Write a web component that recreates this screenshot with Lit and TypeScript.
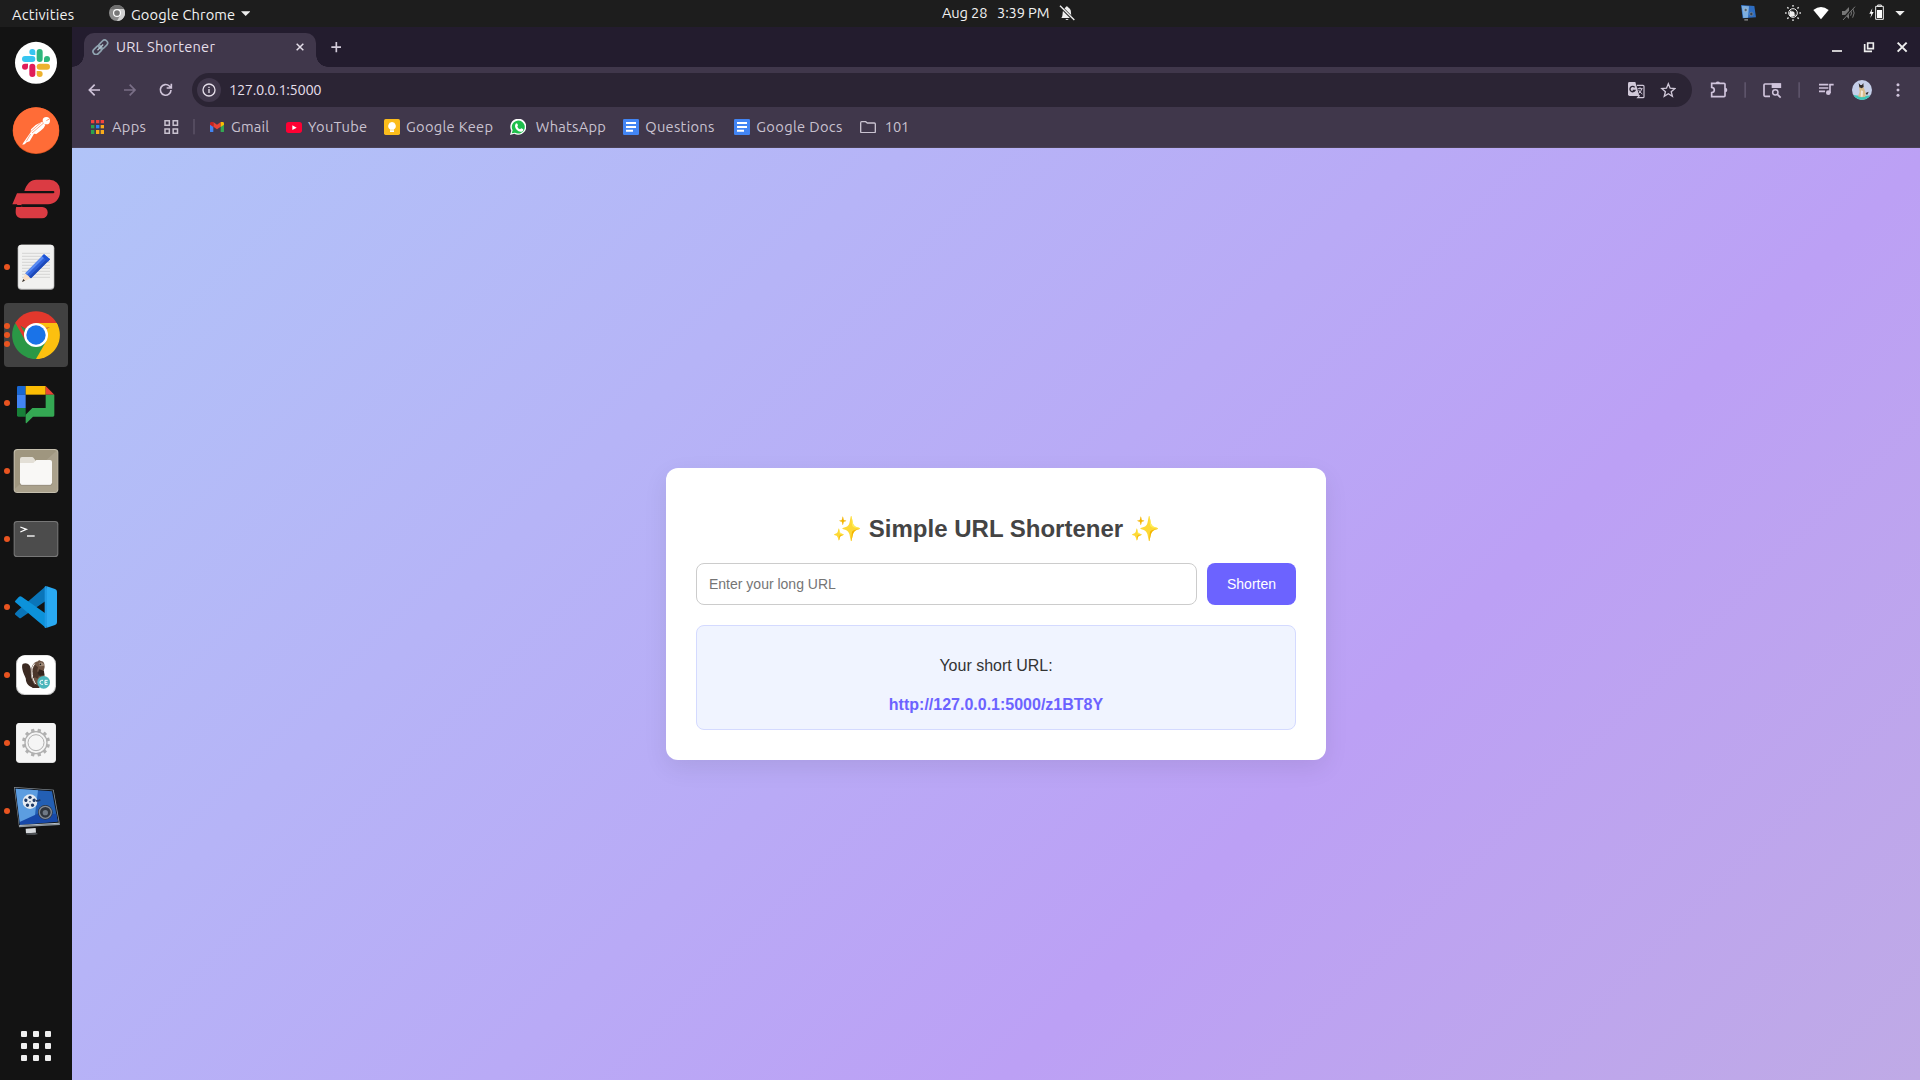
import { LitElement, html, svg, css } from "lit";
import { customElement, property } from "lit/decorators.js";

/** Icon drawn on a grid of three units per pixel; x/y/w/h are grid units. */
const icon = (x: number, y: number, w: number, h: number, body: unknown) =>
  html`<svg class="icon" width=${w / 3} height=${h / 3} viewBox="${x} ${y} ${w} ${h}">${body}</svg>`;

/** Single-line label that tracks its letters to fill a given width. */
@customElement("ui-label")
class UiLabel extends LitElement {
  @property() text = "";
  @property({ type: Number }) width = 0;

  static styles = css`
    :host { display: block; white-space: pre; flex: none; }
    .text { display: inline-block; }
  `;

  firstUpdated() {
    const el = this.renderRoot.querySelector<HTMLElement>(".text")!;
    const natural = el.getBoundingClientRect().width;
    this.style.width = this.width + "px";
    el.style.letterSpacing = (this.width + 0.3 - natural) / this.text.length + "px";
  }

  render() {
    return html`<span class="text">${this.text}</span>`;
  }
}

const gear = Array.from({ length: 12 }, (_, i) => svg`<rect x="103" y="506" width="10" height="10" rx="1" fill="#b0b0b0" transform="rotate(${i * 30 + 15} 108 548)"/>`);
const holes = Array.from({ length: 5 }, (_, i) => svg`<circle cx="90" cy="712" r="5" fill="#1d3a66" transform="rotate(${i * 72} 90 725)"/>`);
const rays = Array.from({ length: 8 }, (_, i) => svg`<rect x="577" y="15" width="4" height="5" fill="#eee" transform="rotate(${i * 45} 579 39)"/>`);

const dockApps = [
  { dots: 0, art: icon(12, 33, 192, 192, svg`
    <circle cx="108" cy="128.5" r="63" fill="#fff"/>
    <g fill="#36c5f0"><rect x="66" y="108" width="40" height="18" rx="9"/><path d="M97 87a9 9 0 0 1 9 9v9h-9a9 9 0 0 1 0-18z"/></g>
    <g fill="#2eb67d"><rect x="110" y="87" width="18" height="39" rx="9"/><path d="M132 126v-9a9 9 0 1 1 9 9z"/></g>
    <g fill="#e01e5a"><rect x="88" y="131" width="18" height="40" rx="9"/><path d="M84 131v9a9 9 0 1 1-9-9z"/></g>
    <g fill="#ecb22e"><rect x="110" y="131" width="40" height="18" rx="9"/><path d="M110 153h9a9 9 0 1 1-9 9z"/></g>`) },
  { dots: 0, art: icon(12, 237, 192, 192, svg`
    <circle cx="108" cy="332" r="70" fill="#d9531f"/><circle cx="108" cy="331" r="69" fill="#ff6c37"/>
    <circle cx="139" cy="302" r="11" fill="#fff"/>
    <path d="M139 302l9-5" stroke="#ff6c37" stroke-width="2"/>
    <path d="M126 305l10 10q-2 8-14 17l-13 10-7-1-13 23-9 3-6 6-7 1 2-4 23-33 1-9 14-13z" fill="#fff"/>
    <path d="M131 309l-35 30M124 307l-32 28M92 342l-13 22" stroke="#ff6c37" stroke-width="1.800"/>`) },
  { dots: 0, art: icon(12, 441, 192, 192, svg`
    <path d="M73 513C80 492 91 479 109 479h40a31 31 0 0 1 31 31v6c0 20-15 37-36 37H65c-2 3-2 8 4 8h58a16 16 0 0 1 16 16v1a17 17 0 0 1-17 17H67c-14 0-20-9-20-19 0-10 1-16 5-23H37l14-33h107c7 0 7-7 0-7z" fill="#db3b43"/>
    <path d="M48 555h17v6H48z" fill="#131313"/>`) },
  { dots: 1, art: icon(12, 645, 192, 192, svg`
    <rect x="53" y="674" width="110" height="135" rx="11" fill="#b9b9b9"/><rect x="55" y="674" width="106" height="132" rx="10" fill="#f1f1f0"/>
    <path d="M66 700h84M66 709h84M66 718h84M66 727h84M66 736h84M66 745h84M66 754h84M66 763h84M66 772h84" stroke="#c7c7c7" stroke-width="2"/>
    <path d="M66 786l10-26 17 15z" fill="#f9dfc5"/><path d="M66 786l4-9 5 5z" fill="#333"/>
    <path d="M76 760l56-57 18 15-57 57z" fill="#2d5fd8"/><path d="M76 760l56-57 6 5-57 56z" fill="#5b8cf2"/><path d="M87 770l57-57 6 5-57 57z" fill="#1e49b8"/>
    <path d="M126 709l6-6 18 15-6 7z" fill="#1c54d6"/>`) },
  { dots: 3, active: true, art: icon(12, 39, 192, 192, svg`
    <path d="M108 135L46 99A72 72 0 0 1 170 99z" fill="#e2382c"/>
    <path d="M108 135L170 99A72 72 0 0 1 108 207z" fill="#fcc00f"/>
    <path d="M108 135L108 207A72 72 0 0 1 46 99z" fill="#2a9846"/>
    <path d="M108 99h62a72 72 0 0 1 4 9l-66 10z" fill="#fcc00f"/>
    <path d="M139 153l-31 54-16-40z" fill="#2a9846"/>
    <path d="M46 99l31 54 8-5-33-57z" fill="#e2382c"/>
    <circle cx="108" cy="135" r="36" fill="#fff"/><circle cx="108" cy="135" r="29" fill="#1a73e8"/>`) },
  { dots: 1, art: icon(12, 243, 192, 192, svg`
    <path d="M55 288h22v26H51v-22a4 4 0 0 1 4-4z" fill="#1967d2"/><path d="M77 288h60v26H77z" fill="#fbbc04"/><path d="M137 288l26 26h-26z" fill="#ea4335"/>
    <path d="M51 314h26v40H51z" fill="#4285f4"/><path d="M51 354h26v26H55a4 4 0 0 1-4-4z" fill="#188038"/>
    <path d="M137 314h26v62a4 4 0 0 1-4 4H99l-19 19q-3 2-3-2v-23l20-20h40z" fill="#34a853"/>`) },
  { dots: 1, art: icon(12, 447, 192, 192, svg`
    <rect x="41" y="477" width="134" height="132" rx="11" fill="#c5bfae"/><rect x="44" y="480" width="128" height="126" rx="9" fill="#9f967f"/>
    <path d="M172 480v117a9 9 0 0 1-9 9H53a9 9 0 0 1-9-9z" fill="#aaa18c"/>
    <path d="M66 501h30q3 0 5 3l6 8v20H60v-25q0-6 6-6z" fill="#e3dfd6"/><path d="M60 519h40l9-9h41q6 0 6 6v64q0 6-6 6H66q-6 0-6-6z" fill="#f9f8f6"/>
    <path d="M60 580q0 6 6 6h84q6 0 6-6" fill="none" stroke="#7d7663" stroke-width="2"/>`) },
  { dots: 1, art: icon(12, 651, 192, 192, svg`
    <rect x="41" y="693" width="134" height="108" rx="10" fill="#777"/><rect x="44" y="696" width="128" height="102" rx="8" fill="#4c4c4c"/>
    <path d="M61 711l18 7-18 8" fill="none" stroke="#fff" stroke-width="4"/><path d="M81 738h23" stroke="#fff" stroke-width="4"/>`) },
  { dots: 1, art: icon(12, 45, 192, 192, svg`
    <path d="M46 159l8-8 84-73v44L64 173q-4 3-7 0l-11-9q-3-2 0-5z" fill="#0a75b9"/>
    <path d="M46 122l11-12q4-3 8 0l73 51v43L46 127q-3-2 0-5z" fill="#0c92da"/>
    <path d="M138 78l27 9q6 2 6 8v92q0 6-6 8l-27 9q3-2 3-7V85q0-5-3-7z" fill="#29a9f2"/><path d="M138 78q3 2 3 7v112q0 5-3 7l-4-1V80z" fill="#1f9ae6"/>`) },
  { dots: 1, art: icon(12, 249, 192, 192, svg`
    <rect x="48" y="286" width="120" height="119" rx="26" fill="#c9c9c9"/><rect x="51" y="286" width="114" height="116" rx="24" fill="#fff"/>
    <path d="M68 312c8-5 18-2 22 7 5 10 1 20 4 32 2 9 8 16 10 24l3 9c-14-1-26-9-29-22 1-9-6-16-9-27-3-10-4-17-1-23z" fill="#3b2a22"/>
    <path d="M95 321c4-10 12-17 19-17 1-4 6-4 8-1 6 0 10 4 11 9l1 9-3 12 3 15-7 33h-17c-8-7-14-17-15-30-1-11-3-20 0-30z" fill="#6f5545"/>
    <path d="M104 311c-8 10-9 20-7 32 1 12 5 22 11 31" fill="none" stroke="#fff" stroke-width="3"/>
    <path d="M98 327l8-12 8 7-3 12 9 8-8 14-7-4-6 3z" fill="#4a352a"/><path d="M118 328l14 5 1 12-14 3-6-8z" fill="#33241d"/>
    <path d="M116 309l8-2 8 5-1 6-12 1z" fill="#a08a78"/>
    <circle cx="121" cy="313" r="2.5" fill="#111"/><path d="M96 379q4-7 12-7l12 12H98z" fill="#3b2a22"/>
    <circle cx="131" cy="367" r="19" fill="#4bb6bc"/>
    <path d="M129 361h-4q-5 0-5 6t5 6h4M143 361h-8v12h8M135 367h7" fill="none" stroke="#fff" stroke-width="3"/>`) },
  { dots: 1, art: icon(12, 453, 192, 192, svg`
    <rect x="48" y="489" width="120" height="120" rx="11" fill="#d5d5d5"/><rect x="49" y="489" width="118" height="118" rx="10" fill="#f5f5f5"/>
    ${gear}<circle cx="108" cy="548" r="33" fill="none" stroke="#b0b0b0" stroke-width="4"/><circle cx="108" cy="548" r="24" fill="none" stroke="#b0b0b0" stroke-width="3"/>`) },
  { dots: 1, art: icon(12, 657, 192, 192, svg`
    <path d="M42 681l119 8 19 106-123 7z" fill="#8e979f"/><path d="M44 683l115 8 18 100-119 7z" fill="#14181d"/><path d="M47 686l109 8 17 90-113 10z" fill="#235fb4"/>
    <path d="M47 686l67 5-12 98-42 4z" fill="#5c9de0"/><path d="M59 786l57-26 53 2 4 23-113 9z" fill="#1748a8"/><path d="M58 795l119-7v3l-119 7z" fill="#b9c2ca"/>
    <circle cx="90" cy="725" r="22" fill="#e6ebf0"/>${holes}<circle cx="90" cy="725" r="2" fill="#1d3a66"/><path d="M108 722q8 2 13-3" stroke="#1d3a66" stroke-width="5" fill="none"/>
    <circle cx="136" cy="757" r="22" fill="#30353d"/><circle cx="136" cy="757" r="18" fill="none" stroke="#848c98" stroke-width="4"/><circle cx="136" cy="758" r="8" fill="#707986"/>
    <path d="M77 806l30-2 1 14-30 2z" fill="#d6d9dc"/><path d="M78 820l30-2 6 4-10 3-24-1z" fill="#4d5054"/>`) },
];

const chromeGrey = icon(327, 15, 48, 48, svg`<circle cx="351" cy="39" r="24" fill="#8b8b8b"/><path d="M351 27h21a24 24 0 0 1-21 36l10-18z" fill="#d0d0d0"/><path d="M330 28a24 24 0 0 1 42-1h-21z" fill="#6e6e6e"/><circle cx="351" cy="39" r="12" fill="#fff"/><circle cx="351" cy="39" r="8.5" fill="#777"/>`);
const appsGrid = icon(273, 360, 39, 42, svg`
  <path d="M273 360h10v10h-10zM288 360h10v10h-10zM302 360h10v10h-10z" fill="#f4433c"/>
  <path d="M273 375h10v10h-10z" fill="#2ba24c"/><path d="M288 375h10v10h-10z" fill="#2a84f5"/><path d="M302 375h10v10h-10z" fill="#f9ab1a"/>
  <path d="M273 390h10v12h-10z" fill="#2ba24c"/><path d="M288 390h10v12h-10zM302 390h10v12h-10z" fill="#f9ab1a"/>`);
const tabGroups = icon(491, 360, 45, 42, svg`<path d="M494 362.500h13v13h-13zM518.500 362.500h13v13h-13zM494 387h13v13h-13zM518.500 387h13v13h-13z" fill="none" stroke="#c9c2d0" stroke-width="4.500"/>`);
const gmail = icon(630, 366, 42, 31, svg`
  <path d="M630 372v22q0 3 3 3h7v-19l-10-8z" fill="#4285f4"/><path d="M662 378v19h7q3 0 3-3v-24z" fill="#34a853"/>
  <path d="M640 366v14l11 8 11-8v-14l-11 8z" fill="#ea4335"/><path d="M630 372q0-9 9-6l1 1v14l-10-7z" fill="#c5221f"/><path d="M672 372q0-9-9-6l-1 1v14l10-7z" fill="#fbbc04"/>`);
const youtube = icon(858, 364, 48, 33, svg`<rect x="858" y="364" width="48" height="33" rx="8" fill="#ff0033"/><path d="M877 374l13 7-13 7z" fill="#fff"/>`);
const keep = icon(1152, 357, 48, 48, svg`<rect x="1152" y="357" width="48" height="48" rx="5" fill="#fbbc1c"/><path d="M1176 366a12 12 0 0 1 6 22v1h-12v-1a12 12 0 0 1 6-22zM1170 391h12v5h-12z" fill="#fff"/>`);
const whatsapp = icon(89, 177, 49, 48, svg`<path d="M89 225l4-13a24 24 0 1 1 9 9z" fill="#fff"/><path d="M94 220l3-9a19.500 19.500 0 1 1 7 7z" fill="#1ebe4b"/><path d="M106 191q3-3 5 0l2 5-2 4q3 6 8 8l4-3 6 3q1 6-5 7-8 2-15-6-8-9-3-18z" fill="#fff"/>`);
const docs = icon(429, 177, 48, 48, svg`<rect x="429" y="177" width="48" height="48" rx="4" fill="#4285f4"/><path d="M438 189h30M438 201h30M438 212h21" stroke="#fff" stroke-width="6"/>`);
const folder = icon(1140, 182, 48, 37, svg`<path d="M1142 188v26q0 3 3 3h38q3 0 3-3v-23q0-3-3-3h-21l-5-4h-12q-3 0-3 4z" fill="none" stroke="#c9c2d0" stroke-width="4"/>`);

const bookmarks = [
  { art: appsGrid, text: "Apps", left: 18, gap: 8, width: 34 },
  { art: tabGroups, text: "", left: 18, gap: 0, width: 0 },
  { art: icon(579, 358, 6, 46, svg`<rect x="580" y="358" width="4" height="46" fill="#5f566b"/>`), text: "", left: 14, gap: 0, width: 0 },
  { art: gmail, text: "Gmail", left: 15, gap: 7, width: 38 },
  { art: youtube, text: "YouTube", left: 17, gap: 6, width: 59 },
  { art: keep, text: "Google Keep", left: 17, gap: 6, width: 87 },
  { art: whatsapp, text: "WhatsApp", left: 17, gap: 9.5, width: 70 },
  { art: docs, text: "Questions", left: 17.5, gap: 6, width: 69 },
  { art: docs, text: "Google Docs", left: 20, gap: 6, width: 86 },
  { art: folder, text: "101", left: 18, gap: 8.5, width: 24 },
];

@customElement("app-root")
class AppRoot extends LitElement {
  static styles = css`
    :host { display: block; width: 1920px; height: 1080px; overflow: hidden; font-family: Ubuntu, "Noto Sans", sans-serif; font-size: 14.67px; }
    * { box-sizing: border-box; }
    .icon { display: block; flex: none; }
    .topbar { height: 27px; padding-bottom: 1px; background: #1d1d1d; color: #f2f2f2; display: grid; grid-template-columns: 942px 1fr auto; align-items: center; line-height: 26px; }
    .row { display: flex; align-items: center; }
    .left { padding-left: 12px; }
    .left ui-label { padding-top: 2px; margin-bottom: -1px; line-height: 25px; }
    .app { margin-left: 35px; gap: 6px; }
    .clock { gap: 10px; }
    .tray { padding-right: 15px; }
    .body { display: flex; height: 1053px; }
    .dock { width: 72px; background: #131313; padding: 4px 4px 15px; display: flex; flex-direction: column; gap: 4px; }
    .tile { position: relative; width: 64px; height: 64px; flex: none; border-radius: 4px; }
    .tile.active { background: #414141; }
    .dots { position: absolute; left: 0; top: 0; height: 64px; width: 6px; display: flex; flex-direction: column; justify-content: center; gap: 2.7px; }
    .dot { width: 6px; height: 6px; border-radius: 50%; background: #e95420; flex: none; }
    .launcher { margin-top: auto; padding: 0 0 4px 17px; }
    .window { width: 1848px; display: flex; flex-direction: column; }
    .window ui-label { padding-bottom: 2px; }
    .tabs { height: 40px; background: #231c2e; display: flex; align-items: flex-end; color: #e9e3ee; }
    .tab { position: relative; margin-left: 12px; width: 232px; height: 34px; background: #40374b; border-radius: 10px 10px 0 0; display: flex; align-items: center; padding: 0 12px 6px 8px; color: #e4dee9; }
    .tab::before, .tab::after { content: ""; position: absolute; bottom: 0; width: 12px; height: 12px; }
    .tab::before { left: -12px; background: radial-gradient(circle at 0 0, transparent 11.5px, #40374b 12px); }
    .tab::after { right: -12px; background: radial-gradient(circle at 100% 0, transparent 11.5px, #40374b 12px); }
    .tab ui-label { margin-left: 7.3px; }
    .close { margin-left: auto; }
    .plus { margin: 0 0 14px 14.7px; }
    .winctl { margin-left: auto; padding: 0 12px 14px 0; display: flex; align-items: center; }
    .toolbar { height: 46px; background: #40374b; display: flex; align-items: center; padding-left: 16px; }
    .omnibox { margin-left: 18px; width: 1500px; height: 34px; border-radius: 17px; background: #2b2434; display: flex; align-items: center; padding: 0 16px 0 5px; color: #e4dee9; }
    .omnibox ui-label { margin-left: 8px; margin-right: auto; }
    .bookmarks { height: 35px; background: #40374b; border-bottom: 1px solid #4a4155; display: flex; align-items: center; padding: 0 0 6px 1px; color: #c9c2d0; }
    .page { flex: 1; display: flex; align-items: center; justify-content: center; background: linear-gradient(135deg, #b1c4f8, #b6b4f7 30%, #bca0f5 67%, #bfaae6); font-family: "Liberation Sans", Arial, sans-serif; }
    .card { width: 660px; height: 292px; padding: 30px; border-radius: 12px; background: #fff; box-shadow: 0 8px 25px rgba(0,0,0,.08); text-align: center; }
    .title { margin: 16px 0 19px; font-size: 24px; line-height: 30px; font-weight: 700; color: #444; }
    .form { display: flex; gap: 10px; }
    .field { flex: 1; min-width: 0; height: 42px; padding: 12px; border: 1px solid #ccc; border-radius: 8px; font: 14px "Liberation Sans", Arial, sans-serif; background: #fff; }
    .field::placeholder { color: #757575; }
    .submit { width: 89px; height: 42px; border: 0; padding: 0; border-radius: 8px; background: #6c63ff; color: #fff; font: 14px "Liberation Sans", Arial, sans-serif; }
    .result { margin-top: 20px; height: 105px; border: 1px solid #d4daff; border-radius: 8px; background: #f0f4ff; padding-top: 30px; font-size: 16px; line-height: 19px; color: #333; }
    .caption { margin: 0 0 20px; }
    .link { color: #6c63ff; font-weight: 700; text-decoration: none; }
  `;

  render() {
    return html`
      <div class="topbar">
        <div class="row left">
          <ui-label text="Activities" width="62"></ui-label>
          <div class="row app">${chromeGrey}<ui-label text="Google Chrome" width="104"></ui-label>${icon(722, 32, 28, 15, svg`<path d="M722 33h28l-14 14z" fill="#eee"/>`)}</div>
        </div>
        <div class="row clock">
          <ui-label text="Aug 28" width="45"></ui-label><ui-label text="3:39 PM" width="52"></ui-label>
          ${icon(477, 15, 48, 48, svg`<path d="M484 54c5-5 3-14 5-23 2-6 8-8 9-11q3-2 5 0c2 3 8 5 9 11 2 9 0 18 6 23zM496 57h10q-5 6-10 0z" fill="#eee"/><path d="M479 17l43 43" stroke="#1d1d1d" stroke-width="9"/><path d="M480 17l43 43" stroke="#eee" stroke-width="4"/>`)}
        </div>
        <div class="row tray">${icon(423, 12, 492, 54, svg`
          <path d="M423 15l40 3 5 34-40 3z" fill="#2d6cc0"/><path d="M425 17l22 2-3 34-14 1z" fill="#7caee0"/><circle cx="437" cy="30" r="5" fill="#4d6275" stroke="#b9cadb" stroke-width="2"/><circle cx="454" cy="42" r="5" fill="#36414f" stroke="#7f93ab" stroke-width="2"/><path d="M433 57h11v5h-11z" fill="#777"/>
          ${rays}<circle cx="579" cy="39" r="13" fill="none" stroke="#eee" stroke-width="3"/><path d="M574 29a11 11 0 0 0 16 14 12 12 0 0 1-21-4q0-6 5-10z" fill="#eee"/><circle cx="576" cy="42" r="8" fill="#eee"/>
          <path d="M640 30q23-18 46 0l-23 28z" fill="#fff"/>
          <g fill="none" stroke="#777" stroke-width="3"><path d="M752 31q5 8 0 16M758 25q9 14 0 28"/></g><path d="M726 33h9l12-12v36l-12-12h-9z" fill="#777"/><path d="M727 59l36-40" stroke="#1d1d1d" stroke-width="6"/><path d="M729 60l36-40" stroke="#777" stroke-width="3"/>
          <path d="M817 25l-9 16h6l-3 13 10-18h-6z" fill="#fff"/><path d="M827 19h23v39h-23zM833 15h11v4h-11z" fill="none" stroke="#eee" stroke-width="3"/><rect x="831" y="30" width="15" height="24" fill="#fff"/>
          <path d="M886 33h28l-14 14z" fill="#eee"/>`)}</div>
      </div>
      <div class="body">
        <div class="dock">
          ${dockApps.map((a) => html`<div class="tile ${a.active ? "active" : ""}">${a.art}<div class="dots">${Array.from({ length: a.dots }, () => html`<i class="dot"></i>`)}</div></div>`)}
          <div class="launcher">${icon(63, 93, 90, 90, svg`${[93, 129, 165].map((y) => [63, 99, 135].map((x) => svg`<rect x=${x} y=${y} width="18" height="18" rx="3" fill="#eee"/>`))}`)}</div>
        </div>
        <div class="window">
          <div class="tabs">
            <div class="tab">
              ${icon(275, 116, 50, 50, svg`<g fill="none" stroke="#8fa3b0" stroke-width="5" transform="rotate(-45 300 141)"><rect x="273" y="132" width="30" height="18" rx="9"/><rect x="297" y="132" width="30" height="18" rx="9"/><path d="M288 141h24" stroke="#b4c4ce" stroke-width="4"/></g>`)}
              <ui-label text="URL Shortener" width="99"></ui-label>
              <span class="close">${icon(888, 129, 24, 24, svg`<path d="M890 131l20 20M910 131l-20 20" stroke="#e4dee9" stroke-width="4.500"/>`)}</span>
            </div>
            <span class="plus">${icon(992, 126, 32, 32, svg`<path d="M1008 126v31M993 141.500h31" stroke="#d3ccda" stroke-width="5"/>`)}</span>
            <div class="winctl">${icon(696, 123, 228, 36, svg`<g fill="none" stroke="#eee" stroke-width="5"><path d="M696 153h30"/><path d="M803 129h17v17h-17z"/><path d="M794 132v22h22"/><path d="M893 128l27 27M920 128l-27 27" stroke-width="6"/></g>`)}</div>
          </div>
          <div class="toolbar">
            ${icon(264, 243, 258, 54, svg`<g fill="none" stroke="#cfc4d9" stroke-width="5"><path d="M300 270h-32M284 254l-16 16 16 16"/><g stroke="#7a6f87"><path d="M372 270h32M389 254l16 16-16 16"/></g><path d="M513 270a16 16 0 1 1-5-12l5 5M514 251v13h-14"/></g>`)}
            <div class="omnibox">
              ${icon(591, 234, 72, 72, svg`<circle cx="627" cy="270" r="36" fill="#40374b"/><circle cx="627" cy="270" r="18" fill="none" stroke="#e4dee9" stroke-width="4"/><path d="M627 267v12M627 260v4" stroke="#e4dee9" stroke-width="4"/>`)}
              <ui-label text="127.0.0.1:5000" width="92"></ui-label>
              ${icon(83, 243, 145, 54, svg`
                <path d="M86 246h19l12 42H88q-5 0-5-5v-32q0-5 3-5z" fill="#d0c8d8"/><path d="M103 262a8 8 0 1 0 1 9h-7" fill="none" stroke="#2b2434" stroke-width="4"/>
                <path d="M110 256h18q3 0 3 3v31q0 3-3 3h-16l6-7" fill="none" stroke="#d0c8d8" stroke-width="3.500"/><path d="M112 266h15M119 262v4M124 267q-2 9-9 13M115 270q3 7 11 12" fill="none" stroke="#d0c8d8" stroke-width="3"/>
                <path d="M204 251l5.500 13.500 14 1.200-10.800 9.300 3.500 14-12.200-7.700-12.200 7.700 3.500-14-10.800-9.300 14-1.200z" fill="none" stroke="#d0c8d8" stroke-width="4"/>`)}
            </div>
            ${icon(276, 234, 644, 72, svg`
              <path d="M335 250h37q3 0 3 3v34q0 3-3 3h-37v-12q8-1 8-8t-8-8z" fill="none" stroke="#d0c4dc" stroke-width="5"/><path d="M347 249a7 7 0 0 1 13 0zM375 263a7 7 0 0 1 0 14z" fill="#d0c4dc"/>
              <path d="M433 247h5v46h-5zM595 247h5v46h-5z" fill="#5d536a"/>
              <path d="M510 289h-15q-3 0-3-3v-31q0-3 3-3h46v12" fill="none" stroke="#d0c4dc" stroke-width="5"/><path d="M515 250h27v14h-27z" fill="#d0c4dc"/><circle cx="526" cy="277" r="8" fill="none" stroke="#d0c4dc" stroke-width="4.500"/><path d="M532 283l10 10" stroke="#d0c4dc" stroke-width="5"/>
              <path d="M657 254h28M657 264h28M657 274h18M688 254h13M690 252v27" stroke="#d0c4dc" stroke-width="5" fill="none"/><circle cx="685" cy="278" r="7" fill="#d0c4dc"/>
              <clipPath id="face"><circle cx="786" cy="270" r="30"/></clipPath><g clip-path="url(#face)"><path d="M756 240h60v60h-60z" fill="#c5cfe9"/><path d="M756 284l30 5 30-3v16h-60z" fill="#3cc8b9"/><path d="M777 261l8 3 6-2 6 16-1 13-13 1-9-3 5-13z" fill="#d9bd8c"/><path d="M776 249l5 6h5l4-6 1 12-6 4-7-3zM797 279l9-4-5 11z" fill="#332d29"/><path d="M783 271l6 2-1 17h-6z" fill="#f1e8d8"/></g>
              <g fill="#d0c4dc"><circle cx="894" cy="254" r="4.500"/><circle cx="894" cy="270" r="4.500"/><circle cx="894" cy="286" r="4.500"/></g>`)}
          </div>
          <div class="bookmarks">
            ${bookmarks.map((b) => html`<div class="row" style="margin-left:${b.left}px;gap:${b.gap}px">${b.art}${b.text ? html`<ui-label text=${b.text} width=${b.width}></ui-label>` : ""}</div>`)}
          </div>
          <main class="page">
            <section class="card">
              <h2 class="title">✨ Simple URL Shortener ✨</h2>
              <div class="form"><input class="field" placeholder="Enter your long URL" /><button class="submit">Shorten</button></div>
              <div class="result"><p class="caption">Your short URL:</p><a class="link">http://127.0.0.1:5000/z1BT8Y</a></div>
            </section>
          </main>
        </div>
      </div>`;
  }
}
